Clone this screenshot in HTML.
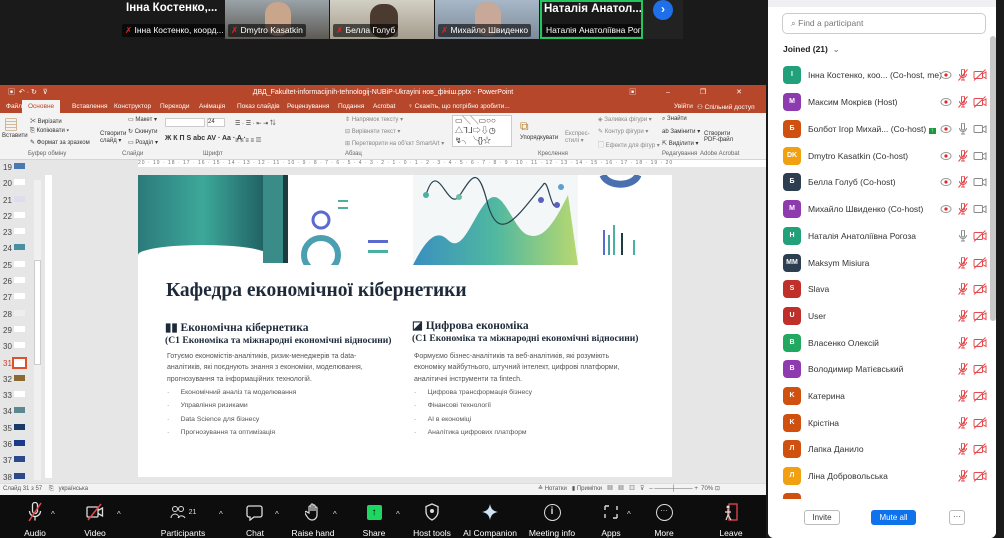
<!DOCTYPE html>
<html><head><meta charset="utf-8"><style>
*{margin:0;padding:0;box-sizing:border-box}
body{width:1004px;height:538px;overflow:hidden;background:#1a1a1a;font-family:"Liberation Sans","Noto Sans CJK SC",sans-serif;position:relative}
.abs{position:absolute}
.tile{position:absolute;top:0;height:39px;width:104px;background:#2a2a2a;overflow:hidden}
.tl{position:absolute;left:3px;bottom:2px;background:rgba(0,0,0,.6);color:#fff;font-size:8.5px;padding:1px 3px;border-radius:2px;white-space:nowrap}
.ppt{position:absolute;left:0;top:85px;width:766px;height:410px;background:#e6e6e6}
.tb{height:15px;background:#b7472a;color:#fff;font-size:7px;text-align:center;line-height:15px}
.tabs{height:13px;background:#b7472a;color:#fff;font-size:6.5px;position:relative}
.tabs span{position:absolute;top:3px}
.ribbon{height:47px;background:#f3f3f3;border-bottom:1px solid #d5d5d5;font-size:6px;color:#333;position:relative}
.ribbon span{position:absolute;white-space:nowrap}
.pp{position:absolute;width:228px;left:768px;top:0;height:538px;background:#fff;border-radius:0 0 6px 6px}
.row{position:absolute;left:15px;height:18px;width:210px}
.av{position:absolute;left:0;top:0;width:18px;height:18px;border-radius:4px;color:#fff;font-size:7px;font-weight:bold;text-align:center;line-height:18px}
.nm{position:absolute;left:25px;top:4px;font-size:8.5px;color:#333;white-space:nowrap}
.ic{position:absolute;top:3px}
.tool{position:absolute;top:500px;width:70px;text-align:center;color:#fff;font-size:8.5px}
.tool .i{height:24px;display:flex;align-items:center;justify-content:center}
.tool .l{margin-top:4px}
.car{position:absolute;top:510px;color:#ddd;font-size:8px}
.st{font-size:6px;color:#555}
</style></head><body>
<div class="tile" style="left:120px;width:105px;background:#1a1a1a"><div class="abs" style="left:6px;top:2px;color:#fff;font-weight:bold;font-size:11.5px">Інна Костенко,...</div><div class="tl" style="left:2px"><span style="color:#e02828">✗</span> Інна Костенко, коорд...</div></div>
<div class="tile" style="left:225px;background:linear-gradient(#9aa3a8,#5d5a55)"><div class="abs" style="left:40px;top:2px;width:26px;height:34px;background:#c9a58c;border-radius:12px"></div><div class="tl"><span style="color:#e02828">✗</span> Dmytro Kasatkin</div></div>
<div class="tile" style="left:330px;background:linear-gradient(#d2cfc4,#a49c8c)"><div class="abs" style="left:40px;top:4px;width:28px;height:34px;background:#4a3a30;border-radius:12px"></div><div class="tl"><span style="color:#e02828">✗</span> Белла Голуб</div></div>
<div class="tile" style="left:435px;background:linear-gradient(#a8b8c8,#7d8a98)"><div class="abs" style="left:40px;top:2px;width:26px;height:34px;background:#c8a898;border-radius:12px"></div><div class="tl"><span style="color:#e02828">✗</span> Михайло Швиденко</div></div>
<div class="tile" style="left:540px;width:103px;background:#1a1a1a;border:2px solid #22c55e"><div class="abs" style="left:2px;top:1px;color:#fff;font-weight:bold;font-size:11.5px;white-space:nowrap">Наталія Анатол...</div><div class="tl" style="left:1px;bottom:1px">Наталія Анатоліївна Рого...</div></div>
<div class="abs" style="left:643px;top:0;width:40px;height:39px;background:#222"></div>
<div class="abs" style="left:653px;top:0;width:20px;height:20px;border-radius:50%;background:#1e6fe8;color:#fff;text-align:center;font-size:12px;line-height:19px;font-weight:bold">›</div>

<div class="ppt">
<div class="tb">ДВД_Fakultet-informacijnih-tehnologij-NUBiP-Ukrayini нов_фініш.pptx - PowerPoint
<span class="abs" style="left:8px;top:0">▣ &nbsp;↶ · ↻ &nbsp; ⊽</span><span class="abs" style="right:10px;top:0;letter-spacing:14px">▣ – ❐ ✕</span></div>
<div class="tabs">
<span style="left:6px">Файл</span>
<span style="left:22px;top:0;height:13px;background:#f3f3f3;color:#b7472a;padding:3px 6px">Основне</span>
<span style="left:72px">Вставлення</span><span style="left:114px">Конструктор</span><span style="left:160px">Переходи</span><span style="left:199px">Анімація</span><span style="left:237px">Показ слайдів</span><span style="left:287px">Рецензування</span><span style="left:338px">Подання</span><span style="left:373px">Acrobat</span><span style="left:408px">♀ Скажіть, що потрібно зробити...</span><span style="left:674px">Увійти</span><span style="left:697px">⚇ Спільний доступ</span></div>
<div class="ribbon">
<span style="left:4px;top:2px;font-size:14px;color:#b08040">▤</span><span style="left:2px;top:20px">Вставити</span>
<span style="left:30px;top:3px">✂ Вирізати</span><span style="left:30px;top:15px">⎘ Копіювати ▾</span><span style="left:30px;top:26px">✎ Формат за зразком</span>
<span style="left:100px;top:18px">Створити<br>слайд ▾</span><span style="left:128px;top:3px">▭ Макет ▾</span><span style="left:128px;top:15px">↻ Скинути</span><span style="left:128px;top:26px">▭ Розділ ▾</span>
<span style="left:165px;top:5px;width:40px;height:9px;background:#fff;border:1px solid #ccc"></span><span style="left:207px;top:5px;width:18px;height:9px;background:#fff;border:1px solid #ccc">24</span>
<span style="left:165px;top:22px;font-size:7px;font-weight:bold">Ж К П S abc AV · Aa · A ·</span>
<span style="left:235px;top:5px">☰ · ☰ · ⇤ ⇥ ⇅</span><span style="left:235px;top:22px">≡ ≡ ≡ ≡ ▥</span>
<span style="left:345px;top:3px;color:#888">⇕ Напрямок тексту ▾</span><span style="left:345px;top:15px;color:#888">⊟ Вирівняти текст ▾</span><span style="left:345px;top:27px;color:#888">⊞ Перетворити на об'єкт SmartArt ▾</span>
<span style="left:452px;top:2px;width:60px;height:32px;background:#fff;border:1px solid #ccc;font-size:8px;line-height:10px;padding-left:2px">▭╲╲▭○○<br>△ᒣᒧ⇨⇩◷<br>↯╮╰{}☆</span>
<span style="left:520px;top:6px;font-size:12px;color:#c08030">⧉</span><span style="left:520px;top:22px">Упорядкувати</span>
<span style="left:565px;top:18px;color:#888">Експрес-<br>стилі ▾</span>
<span style="left:598px;top:3px;color:#888">◈ Заливка фігури ▾</span><span style="left:598px;top:15px;color:#888">✎ Контур фігури ▾</span><span style="left:598px;top:27px;color:#888">▢ Ефекти для фігур ▾</span>
<span style="left:662px;top:3px">⌕ Знайти</span><span style="left:662px;top:15px">ab Замінити ▾</span><span style="left:662px;top:27px">⇱ Виділити ▾</span>
<span style="left:704px;top:18px">Створити<br>PDF-файл</span>
<span style="left:28px;top:38px;color:#666">Буфер обміну</span><span style="left:122px;top:38px;color:#666">Слайди</span><span style="left:203px;top:38px;color:#666">Шрифт</span><span style="left:345px;top:38px;color:#666">Абзац</span><span style="left:538px;top:38px;color:#666">Креслення</span><span style="left:662px;top:38px;color:#666">Редагування</span><span style="left:700px;top:38px;color:#666">Adobe Acrobat</span>
</div>
<div class="abs" style="left:138px;top:75px;width:628px;height:7px;background:#fff;font-size:5px;color:#777;letter-spacing:1px;white-space:nowrap;overflow:hidden">20 · 19 · 18 · 17 · 16 · 15 · 14 · 13 · 12 · 11 · 10 · 9 · 8 · 7 · 6 · 5 · 4 · 3 · 2 · 1 · 0 · 1 · 2 · 3 · 4 · 5 · 6 · 7 · 8 · 9 · 10 · 11 · 12 · 13 · 14 · 15 · 16 · 17 · 18 · 19 · 20</div>
<div class="abs" style="left:0;top:75px;width:34px;height:322px;background:#e6e6e6;font-size:8px;color:#444">
<div style="position:absolute;left:0;top:0;line-height:16.3px;padding-left:3px">19<br>20<br>21<br>22<br>23<br>24<br>25<br>26<br>27<br>28<br>29<br>30<br><span style="color:#d0402a">31</span><br>32<br>33<br>34<br>35<br>36<br>37<br>38</div>
<div style="position:absolute;left:14px;top:3px;width:11px;line-height:16.3px;font-size:6px">
<div style="background:#4a78b0;height:6px;margin-bottom:10.3px"></div><div style="background:#fff;height:6px;margin-bottom:10.3px"></div><div style="background:#dde;height:6px;margin-bottom:10.3px"></div><div style="background:#fff;height:6px;margin-bottom:10.3px"></div><div style="background:#fff;height:6px;margin-bottom:10.3px"></div><div style="background:#4a90a0;height:6px;margin-bottom:10.3px"></div><div style="background:#fff;height:6px;margin-bottom:10.3px"></div><div style="background:#fff;height:6px;margin-bottom:10.3px"></div><div style="background:#fff;height:6px;margin-bottom:10.3px"></div><div style="background:#eee;height:6px;margin-bottom:10.3px"></div><div style="background:#fff;height:6px;margin-bottom:10.3px"></div><div style="background:#fff;height:6px;margin-bottom:10.3px"></div><div style="background:#fff;height:8px;outline:2px solid #e0502a;margin-bottom:8.3px"></div><div style="background:#8a6a30;height:6px;margin-bottom:10.3px"></div><div style="background:#fff;height:6px;margin-bottom:10.3px"></div><div style="background:#5a8a90;height:6px;margin-bottom:10.3px"></div><div style="background:#1a3a6a;height:6px;margin-bottom:10.3px"></div><div style="background:#1a3a8a;height:6px;margin-bottom:10.3px"></div><div style="background:#2a4a8a;height:6px;margin-bottom:10.3px"></div><div style="background:#2a4a8a;height:6px"></div></div>
</div>
<div class="abs" style="left:34px;top:95px;width:7px;height:300px;background:#f0f0f0"><div style="margin-top:80px;height:105px;background:#fff;border:1px solid #ccc"></div></div>
<div class="abs" style="left:45px;top:90px;width:7px;height:303px;background:#fff"></div>
<div class="abs" style="left:138px;top:90px;width:534px;height:302px;background:#fff;overflow:hidden">
<div class="abs" style="left:0;top:0;width:130px;height:85px;background:linear-gradient(90deg,#2b7a7a,#3da89a,#1f5d60)"></div>
<div class="abs" style="left:0;top:70px;width:130px;height:20px;background:#fff;border-radius:60% 60% 0 0"></div>
<div class="abs" style="left:125px;top:0;width:25px;height:88px;background:#3a8c88"></div>
<div class="abs" style="left:145px;top:0;width:5px;height:88px;background:#1e3b40"></div>
<svg class="abs" style="left:150px;top:0" width="370" height="90">
<circle cx="33" cy="45" r="8" fill="none" stroke="#5a6ad0" stroke-width="3"/>
<circle cx="33" cy="80" r="17" fill="none" stroke="#4aa0b0" stroke-width="6"/>
<rect x="50" y="25" width="10" height="2" fill="#4ab0a0"/><rect x="50" y="32" width="10" height="2" fill="#4ab0a0"/>
<rect x="80" y="65" width="20" height="3" fill="#5a6ad0"/><rect x="80" y="75" width="20" height="3" fill="#4ab0a0"/>
<rect x="125" y="0" width="165" height="90" fill="#f3f7f8"/>
<path d="M125 90 C140 60 150 55 160 65 C175 80 185 40 200 25 C215 10 225 55 240 60 C255 65 265 50 280 20 L290 90Z" fill="url(#g)"/>
<defs><linearGradient id="g" x1="0" x2="1"><stop offset="0" stop-color="#3a8fc0"/><stop offset=".5" stop-color="#50b8a0"/><stop offset="1" stop-color="#b8d870"/></linearGradient></defs>
<path d="M138 20 C150 -20 160 40 172 20 C185 0 190 -10 200 30 C212 70 230 40 255 10 C260 0 263 40 270 30" fill="none" stroke="#2a4050" stroke-width="1.2"/>
<circle cx="138" cy="20" r="3" fill="#4ab0a0"/><circle cx="171" cy="22" r="3" fill="#6ac0a0"/><circle cx="253" cy="25" r="3" fill="#5a60c0"/><circle cx="273" cy="12" r="3" fill="#5aa0d0"/><circle cx="269" cy="30" r="3" fill="#5a60c0"/>
<path d="M315 0 A18 12 0 0 0 350 0" fill="none" stroke="#4a70b0" stroke-width="7"/>
<rect x="315" y="55" width="2" height="25" fill="#5a6ad0"/><rect x="320" y="60" width="2" height="20" fill="#4aa0a0"/><rect x="325" y="50" width="2" height="30" fill="#4ab0a0"/><rect x="333" y="58" width="2" height="22" fill="#1e3b40"/><rect x="345" y="65" width="2" height="15" fill="#4ab0a0"/>
</svg>
<div class="abs" style="left:28px;top:105px;font-family:'Liberation Serif',serif;font-weight:bold;font-size:19.5px;color:#1e2a3a;white-space:nowrap">Кафедра економічної кібернетики</div>
<div class="abs" style="left:27px;top:145px;font-family:'Liberation Serif',serif;font-weight:bold;font-size:11.5px;color:#1e2a3a;white-space:nowrap">▮▮ Економічна кібернетика</div>
<div class="abs" style="left:27px;top:160px;font-family:'Liberation Serif',serif;font-weight:bold;font-size:9.6px;color:#1e2a3a;white-space:nowrap">(С1 Економіка та міжнародні економічні відносини)</div>
<div class="abs" style="left:29px;top:176px;font-size:7px;color:#555;line-height:11.3px;white-space:nowrap">Готуємо економістів-аналітиків, ризик-менеджерів та data-<br>аналітиків, які поєднують знання з економіки, моделювання,<br>прогнозування та інформаційних технологій.</div>
<div class="abs" style="left:29px;top:211px;font-size:6.8px;color:#555;line-height:13.4px;white-space:nowrap">·&nbsp;&nbsp;&nbsp;&nbsp;&nbsp;&nbsp;Економічний аналіз та моделювання<br>·&nbsp;&nbsp;&nbsp;&nbsp;&nbsp;&nbsp;Управління ризиками<br>·&nbsp;&nbsp;&nbsp;&nbsp;&nbsp;&nbsp;Data Science для бізнесу<br>·&nbsp;&nbsp;&nbsp;&nbsp;&nbsp;&nbsp;Прогнозування та оптимізація</div>
<div class="abs" style="left:274px;top:143px;font-family:'Liberation Serif',serif;font-weight:bold;font-size:11.5px;color:#1e2a3a;white-space:nowrap">◪ Цифрова економіка</div>
<div class="abs" style="left:274px;top:158px;font-family:'Liberation Serif',serif;font-weight:bold;font-size:9.6px;color:#1e2a3a;white-space:nowrap">(С1 Економіка та міжнародні економічні відносини)</div>
<div class="abs" style="left:276px;top:176px;font-size:7px;color:#555;line-height:11.3px;white-space:nowrap">Формуємо бізнес-аналітиків та веб-аналітиків, які розуміють<br>економіку майбутнього, штучний інтелект, цифрові платформи,<br>аналітичні інструменти та fintech.</div>
<div class="abs" style="left:276px;top:211px;font-size:6.8px;color:#555;line-height:13.4px;white-space:nowrap">·&nbsp;&nbsp;&nbsp;&nbsp;&nbsp;&nbsp;Цифрова трансформація бізнесу<br>·&nbsp;&nbsp;&nbsp;&nbsp;&nbsp;&nbsp;Фінансові технології<br>·&nbsp;&nbsp;&nbsp;&nbsp;&nbsp;&nbsp;AI в економіці<br>·&nbsp;&nbsp;&nbsp;&nbsp;&nbsp;&nbsp;Аналітика цифрових платформ</div>
</div>
<div class="abs st" style="left:0;top:398px;width:766px;height:12px;background:#f3f3f3;border-top:1px solid #ddd;line-height:11px;padding-left:3px">Слайд 31 з 57 &nbsp;&nbsp; ⎘ &nbsp; українська
<span class="abs" style="left:538px;top:0">≙ Нотатки &nbsp; ▮ Примітки &nbsp; ▦ &nbsp; ▦ &nbsp; ▥ &nbsp; ⊽ &nbsp; – ────┼──── + &nbsp;70% ⊡</span></div>
</div>

<svg width="0" height="0" style="position:absolute">
<defs>
<g id="mo"><path d="M4.5 1.5a1.5 1.5 0 013 0v4a1.5 1.5 0 01-3 0z M2.5 5a3.5 3.5 0 007 0 M6 8.5v2.5 M4 11h4 M1.5 11.5L10.5 0.5" fill="none" stroke="#e5484d" stroke-width="1"/></g>
<g id="co"><rect x="1" y="2.5" width="8.5" height="7" rx="1" fill="none" stroke="#e5484d"/><path d="M9.5 5l3.5-2v6.5L9.5 7.5 M1 11.5L12.5 0.5" fill="none" stroke="#e5484d"/></g>
<g id="mg"><path d="M4.5 1.5a1.5 1.5 0 013 0v4a1.5 1.5 0 01-3 0z M2.5 5a3.5 3.5 0 007 0 M6 8.5v2.5 M4 11h4" fill="none" stroke="#888" stroke-width="1"/></g>
<g id="cg"><rect x="1" y="2.5" width="8.5" height="7" rx="1" fill="none" stroke="#888"/><path d="M9.5 5l3.5-2v6.5L9.5 7.5" fill="none" stroke="#888"/></g>
<g id="ey"><ellipse cx="6" cy="6" rx="5" ry="3.5" fill="none" stroke="#999"/><circle cx="6" cy="6" r="1.6" fill="#e02828"/></g>
</defs></svg>

<div class="pp">
<div class="abs" style="left:0;top:0;width:228px;height:7px;background:#f0f0f2"></div>
<div class="abs" style="left:14px;top:13px;width:204px;height:21px;border:1px solid #ccc;border-radius:5px;font-size:8.5px;color:#777;line-height:19px;padding-left:8px">⌕ Find a participant</div>
<div class="abs" style="left:15px;top:44px;font-size:8.5px;font-weight:bold;color:#222">Joined (21) <span style="font-weight:normal;color:#666">&nbsp;⌄</span></div>
<div class="abs" style="left:222px;top:36px;width:6px;height:285px;background:#c8c8c8;border-radius:3px"></div>

<div class="row" style="top:66px"><div class="av" style="background:#22a07a">I</div><div class="nm">Інна Костенко, коо... (Co-host, me)</div><svg class="ic" style="left:157px" width="12" height="12"><use href="#ey"/></svg><svg class="ic" style="left:174px" width="12" height="12"><use href="#mo"/></svg><svg class="ic" style="left:190px" width="14" height="12"><use href="#co"/></svg></div>
<div class="row" style="top:93px"><div class="av" style="background:#8e3bb0">M</div><div class="nm">Максим Мокрієв (Host)</div><svg class="ic" style="left:157px" width="12" height="12"><use href="#ey"/></svg><svg class="ic" style="left:174px" width="12" height="12"><use href="#mo"/></svg><svg class="ic" style="left:190px" width="14" height="12"><use href="#co"/></svg></div>
<div class="row" style="top:120px"><div class="av" style="background:#d05010">Б</div><div class="nm">Болбот Ігор Михай... (Co-host) <span style="background:#1a9a3a;color:#fff;font-size:6px;padding:0 2px">↑</span></div><svg class="ic" style="left:157px" width="12" height="12"><use href="#ey"/></svg><svg class="ic" style="left:174px" width="12" height="12"><use href="#mg"/></svg><svg class="ic" style="left:190px" width="14" height="12"><use href="#cg"/></svg></div>
<div class="row" style="top:147px"><div class="av" style="background:#f0a010">DK</div><div class="nm">Dmytro Kasatkin (Co-host)</div><svg class="ic" style="left:157px" width="12" height="12"><use href="#ey"/></svg><svg class="ic" style="left:174px" width="12" height="12"><use href="#mo"/></svg><svg class="ic" style="left:190px" width="14" height="12"><use href="#cg"/></svg></div>
<div class="row" style="top:173px"><div class="av" style="background:#2c3e50">Б</div><div class="nm">Белла Голуб (Co-host)</div><svg class="ic" style="left:157px" width="12" height="12"><use href="#ey"/></svg><svg class="ic" style="left:174px" width="12" height="12"><use href="#mo"/></svg><svg class="ic" style="left:190px" width="14" height="12"><use href="#cg"/></svg></div>
<div class="row" style="top:200px"><div class="av" style="background:#8e3bb0">M</div><div class="nm">Михайло Швиденко (Co-host)</div><svg class="ic" style="left:157px" width="12" height="12"><use href="#ey"/></svg><svg class="ic" style="left:174px" width="12" height="12"><use href="#mo"/></svg><svg class="ic" style="left:190px" width="14" height="12"><use href="#cg"/></svg></div>
<div class="row" style="top:227px"><div class="av" style="background:#22a07a">H</div><div class="nm">Наталія Анатоліївна Рогоза</div><svg class="ic" style="left:174px" width="12" height="12"><use href="#mg"/></svg><svg class="ic" style="left:190px" width="14" height="12"><use href="#co"/></svg></div>
<div class="row" style="top:254px"><div class="av" style="background:#2c3e50">MM</div><div class="nm">Maksym Misiura</div><svg class="ic" style="left:174px" width="12" height="12"><use href="#mo"/></svg><svg class="ic" style="left:190px" width="14" height="12"><use href="#co"/></svg></div>
<div class="row" style="top:280px"><div class="av" style="background:#c0302a">S</div><div class="nm">Slava</div><svg class="ic" style="left:174px" width="12" height="12"><use href="#mo"/></svg><svg class="ic" style="left:190px" width="14" height="12"><use href="#co"/></svg></div>
<div class="row" style="top:307px"><div class="av" style="background:#c0302a">U</div><div class="nm">User</div><svg class="ic" style="left:174px" width="12" height="12"><use href="#mo"/></svg><svg class="ic" style="left:190px" width="14" height="12"><use href="#co"/></svg></div>
<div class="row" style="top:334px"><div class="av" style="background:#22a860">B</div><div class="nm">Власенко Олексій</div><svg class="ic" style="left:174px" width="12" height="12"><use href="#mo"/></svg><svg class="ic" style="left:190px" width="14" height="12"><use href="#co"/></svg></div>
<div class="row" style="top:360px"><div class="av" style="background:#8e3bb0">B</div><div class="nm">Володимир Матієвський</div><svg class="ic" style="left:174px" width="12" height="12"><use href="#mo"/></svg><svg class="ic" style="left:190px" width="14" height="12"><use href="#co"/></svg></div>
<div class="row" style="top:387px"><div class="av" style="background:#d05010">K</div><div class="nm">Катерина</div><svg class="ic" style="left:174px" width="12" height="12"><use href="#mo"/></svg><svg class="ic" style="left:190px" width="14" height="12"><use href="#co"/></svg></div>
<div class="row" style="top:414px"><div class="av" style="background:#d05010">K</div><div class="nm">Крістіна</div><svg class="ic" style="left:174px" width="12" height="12"><use href="#mo"/></svg><svg class="ic" style="left:190px" width="14" height="12"><use href="#co"/></svg></div>
<div class="row" style="top:440px"><div class="av" style="background:#d05010">Л</div><div class="nm">Лапка Данило</div><svg class="ic" style="left:174px" width="12" height="12"><use href="#mo"/></svg><svg class="ic" style="left:190px" width="14" height="12"><use href="#co"/></svg></div>
<div class="row" style="top:467px"><div class="av" style="background:#f0a010">Л</div><div class="nm">Ліна Добровольська</div><svg class="ic" style="left:174px" width="12" height="12"><use href="#mo"/></svg><svg class="ic" style="left:190px" width="14" height="12"><use href="#co"/></svg></div>
<div class="abs" style="left:15px;top:493px;width:18px;height:6px;background:#d05010;border-radius:4px 4px 0 0"></div>
<div class="abs" style="left:0;top:499px;width:228px;height:39px;background:#fff;border-radius:0 0 6px 6px"></div>
<div class="abs" style="left:36px;top:510px;width:36px;height:15px;border:1px solid #bbb;border-radius:3px;font-size:8px;text-align:center;line-height:13px;color:#333">Invite</div>
<div class="abs" style="left:103px;top:510px;width:45px;height:15px;background:#0e72ed;border-radius:3px;font-size:8px;text-align:center;line-height:15px;color:#fff">Mute all</div>
<div class="abs" style="left:181px;top:510px;width:16px;height:15px;border:1px solid #bbb;border-radius:3px;font-size:8px;text-align:center;line-height:11px;color:#333">···</div>
</div>

<div class="abs" style="left:0;top:495px;width:766px;height:43px;background:#0d0d0d"></div>
<div class="tool" style="left:0"><div class="i"><svg width="18" height="20" viewBox="0 0 18 20"><path d="M6.5 3a2.5 2.5 0 015 0v6a2.5 2.5 0 01-5 0z M3.5 9a5.5 5.5 0 0011 0 M9 14.5v4" fill="none" stroke="#ddd" stroke-width="1.3"/><path d="M3 19L15 1" stroke="#e5484d" stroke-width="1.5"/></svg></div><div class="l">Audio</div></div>
<div class="tool" style="left:60px"><div class="i"><svg width="20" height="18" viewBox="0 0 20 18"><rect x="2" y="4" width="11" height="10" rx="1" fill="none" stroke="#ddd" stroke-width="1.3"/><path d="M13 7.5l4.5-2.5v8l-4.5-2.5" fill="none" stroke="#ddd" stroke-width="1.3"/><path d="M3 17L16 1" stroke="#e5484d" stroke-width="1.5"/></svg></div><div class="l">Video</div></div>
<div class="tool" style="left:148px"><div class="i"><svg width="16" height="16"><circle cx="5" cy="5" r="2.5" fill="none" stroke="#ddd"/><circle cx="11" cy="5" r="2.5" fill="none" stroke="#ddd"/><path d="M1 14a4 4 0 018 0 M8 14a4 4 0 017 0" fill="none" stroke="#ddd"/></svg><span style="font-size:7px;margin-left:3px;color:#ddd">21</span></div><div class="l">Participants</div></div>
<div class="tool" style="left:220px"><div class="i"><svg width="18" height="18"><path d="M3 3h11a2 2 0 012 2v7a2 2 0 01-2 2H8l-4 3v-3H3a2 2 0 01-2-2V5a2 2 0 012-2z" fill="none" stroke="#ddd" stroke-width="1.3"/></svg></div><div class="l">Chat</div></div>
<div class="tool" style="left:278px"><div class="i"><svg width="16" height="18"><path d="M4 10V4a1 1 0 012 0v4V2a1 1 0 012 0v6V3a1 1 0 012 0v5V5a1 1 0 012 0v7a5 5 0 01-5 5c-3 0-4-2-6-5l-1-2a1 1 0 012-1z" fill="none" stroke="#ddd" stroke-width="1.2"/></svg></div><div class="l">Raise hand</div></div>
<div class="tool" style="left:339px"><div class="i"><span style="background:#1ed760;color:#000;width:15px;height:15px;display:block;font-size:10px;line-height:15px;border-radius:2px">↑</span></div><div class="l">Share</div></div>
<div class="tool" style="left:397px"><div class="i"><svg width="16" height="18"><path d="M8 1l6 2.5v5c0 4-3 7-6 8.5C5 15.5 2 12.5 2 8.5v-5z" fill="none" stroke="#ddd" stroke-width="1.3"/><circle cx="8" cy="8" r="2" fill="#ddd"/></svg></div><div class="l">Host tools</div></div>
<div class="tool" style="left:455px"><div class="i"><svg width="18" height="18"><path d="M9 1C10 6 12 8 17 9 12 10 10 12 9 17 8 12 6 10 1 9 6 8 8 6 9 1z" fill="#cfe3f5"/></svg></div><div class="l">AI Companion</div></div>
<div class="tool" style="left:517px"><div class="i"><span style="width:17px;height:17px;border:1.5px solid #ddd;border-radius:50%;color:#ddd;font-size:10px;line-height:14px;display:block;font-weight:bold">i</span></div><div class="l">Meeting info</div></div>
<div class="tool" style="left:576px"><div class="i"><svg width="16" height="16"><path d="M2 2h4 M2 2v4 M14 14h-4 M14 14v-4 M2 14v-4 M14 2v4" stroke="#ddd" stroke-width="1.4" fill="none"/></svg></div><div class="l">Apps</div></div>
<div class="tool" style="left:629px"><div class="i"><span style="width:17px;height:17px;border:1.5px solid #ddd;border-radius:50%;color:#ddd;font-size:8px;line-height:11px;display:block">···</span></div><div class="l">More</div></div>
<div class="tool" style="left:696px"><div class="i"><svg width="16" height="18"><rect x="6" y="1" width="8" height="16" fill="none" stroke="#e5484d" stroke-width="1.3"/><circle cx="5" cy="4" r="1.5" fill="#ddd"/><path d="M5 6v6l-2 5 M5 12l3 5 M2 9h6" stroke="#ddd" stroke-width="1.2" fill="none"/></svg></div><div class="l">Leave</div></div>
<span class="car" style="left:51px">^</span><span class="car" style="left:117px">^</span><span class="car" style="left:219px">^</span><span class="car" style="left:275px">^</span><span class="car" style="left:333px">^</span><span class="car" style="left:396px">^</span><span class="car" style="left:627px">^</span>
</body></html>
